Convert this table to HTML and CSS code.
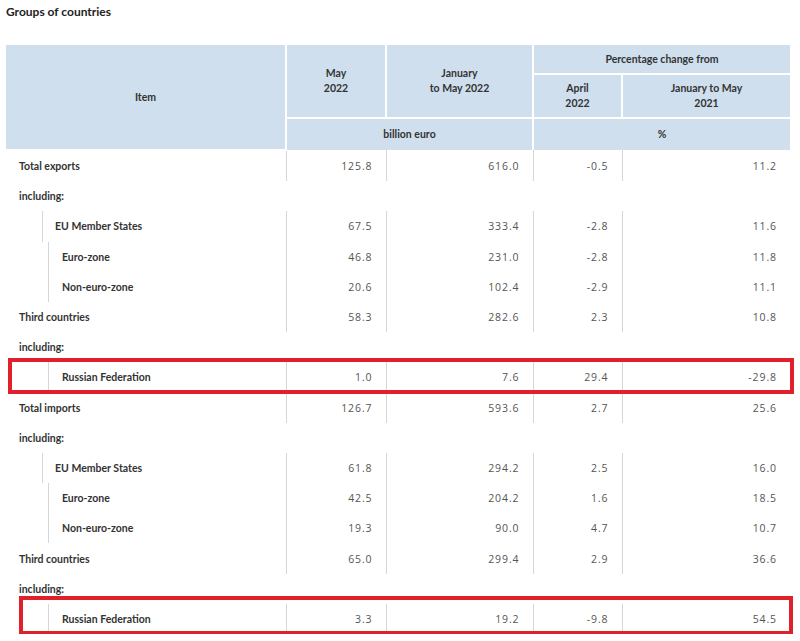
FILE: index.html
```html
<!DOCTYPE html>
<html lang="en">
<head>
<meta charset="utf-8">
<title>Groups of countries</title>
<link rel="stylesheet" href="styles.css">
</head>
<body>
<h2 class="title">Groups of countries</h2>
<div class="table-wrap">
<table class="data">
  <colgroup>
    <col class="c-item"><col class="c-may"><col class="c-jan"><col class="c-apr"><col class="c-janmay">
  </colgroup>
  <thead>
    <tr class="h1">
      <th rowspan="3">Item</th>
      <th rowspan="2">May<br>2022</th>
      <th rowspan="2">January<br>to May 2022</th>
      <th colspan="2">Percentage change from</th>
    </tr>
    <tr class="h2">
      <th>April<br>2022</th>
      <th>January to May<br>2021</th>
    </tr>
    <tr class="h3">
      <th colspan="2">billion euro</th>
      <th colspan="2">%</th>
    </tr>
  </thead>
  <tbody>
    <tr><td class="lbl"><div class="l0">Total exports</div></td><td>125.8</td><td>616.0</td><td>-0.5</td><td>11.2</td></tr>
    <tr class="inc"><td class="lbl" colspan="5"><div class="l0">including:</div></td></tr>
    <tr><td class="lbl ind1"><div class="l1">EU Member States</div></td><td>67.5</td><td>333.4</td><td>-2.8</td><td>11.6</td></tr>
    <tr><td class="lbl ind2"><div class="l2">Euro-zone</div></td><td>46.8</td><td>231.0</td><td>-2.8</td><td>11.8</td></tr>
    <tr><td class="lbl ind2"><div class="l2">Non-euro-zone</div></td><td>20.6</td><td>102.4</td><td>-2.9</td><td>11.1</td></tr>
    <tr><td class="lbl"><div class="l0">Third countries</div></td><td>58.3</td><td>282.6</td><td>2.3</td><td>10.8</td></tr>
    <tr class="inc"><td class="lbl" colspan="5"><div class="l0">including:</div></td></tr>
    <tr><td class="lbl ind2"><div class="l2">Russian Federation</div></td><td>1.0</td><td>7.6</td><td>29.4</td><td>-29.8</td></tr>
    <tr><td class="lbl"><div class="l0">Total imports</div></td><td>126.7</td><td>593.6</td><td>2.7</td><td>25.6</td></tr>
    <tr class="inc"><td class="lbl" colspan="5"><div class="l0">including:</div></td></tr>
    <tr><td class="lbl ind1"><div class="l1">EU Member States</div></td><td>61.8</td><td>294.2</td><td>2.5</td><td>16.0</td></tr>
    <tr><td class="lbl ind2"><div class="l2">Euro-zone</div></td><td>42.5</td><td>204.2</td><td>1.6</td><td>18.5</td></tr>
    <tr><td class="lbl ind2"><div class="l2">Non-euro-zone</div></td><td>19.3</td><td>90.0</td><td>4.7</td><td>10.7</td></tr>
    <tr><td class="lbl"><div class="l0">Third countries</div></td><td>65.0</td><td>299.4</td><td>2.9</td><td>36.6</td></tr>
    <tr class="inc"><td class="lbl" colspan="5"><div class="l0">including:</div></td></tr>
    <tr><td class="lbl ind2"><div class="l2">Russian Federation</div></td><td>3.3</td><td>19.2</td><td>-9.8</td><td>54.5</td></tr>
  </tbody>
</table>
<div class="mark mark-1"></div>
<div class="mark mark-2"></div>
</div>
</body>
</html>
```

FILE: styles.css
```css
html, body {
  margin: 0;
  padding: 0;
  background: #ffffff;
}
body {
  font-family: "Lato", "Open Sans", sans-serif;
  color: #333;
  padding: 0 10px 0 6px;
}
.title {
  margin: 0;
  padding-top: 3px;
  font-size: 12px;
  font-weight: 700;
  line-height: 17px;
  color: #222;
}
.table-wrap {
  position: relative;
  margin-top: 25px;
  width: 784px;
}
.data {
  width: 784px;
  border-collapse: collapse;
  table-layout: fixed;
  font-size: 10.5px;
}
.c-item { width: 280px; }
.c-may { width: 100px; }
.c-jan { width: 147px; }
.c-apr { width: 89px; }
.c-janmay { width: 168px; }

.data th {
  background: #cfdfee;
  border: 2px solid #fff;
  font-weight: 700;
  color: #333;
  text-align: center;
  vertical-align: middle;
  line-height: 15px;
  padding: 0;
}
.data thead tr:first-child th { border-top: 0; }
.data th:first-child { border-left: 0; }
.data tr.h1 th[colspan] { height: 28px; }
.data tr.h2 th { height: 42px; }
.data tr.h3 th { height: 31px; border-bottom: 0; }
.data tr.h3 th:last-child, .data tr.h1 th:last-child, .data tr.h2 th:last-child { border-right: 0; }

.data td {
  height: 30.2px;
  padding: 0 13px 0 0;
  text-align: right;
  vertical-align: middle;
  font-family: "Open Sans", sans-serif;
  font-size: 10.5px;
  color: #555;
  letter-spacing: 0.9px;
  border-left: 1px solid #d6d6d6;
}
.data td.lbl {
  border-left: 0;
  text-align: left;
  padding: 0 0 0 13px;
  font-family: "Lato", sans-serif;
  font-size: 10.5px;
  color: #333;
  font-weight: 700;
  letter-spacing: 0;
  height: 30.2px;
}
.data td.ind1 { padding-left: 36px; }
.data td.ind2 { padding-left: 42px; }
.l1, .l2 {
  border-left: 1px solid #d6d6d6;
  height: 30.2px;
  line-height: 30.2px;
}
.l1 { padding-left: 12px; }
.l2 { padding-left: 13px; }

.mark {
  position: absolute;
  border: 4px solid #e0212b;
  box-sizing: border-box;
  pointer-events: none;
}
.mark-1 { left: 2px; top: 313px; width: 786px; height: 36px; }
.mark-2 { left: 13px; top: 551px; width: 774px; height: 39px; }
```
